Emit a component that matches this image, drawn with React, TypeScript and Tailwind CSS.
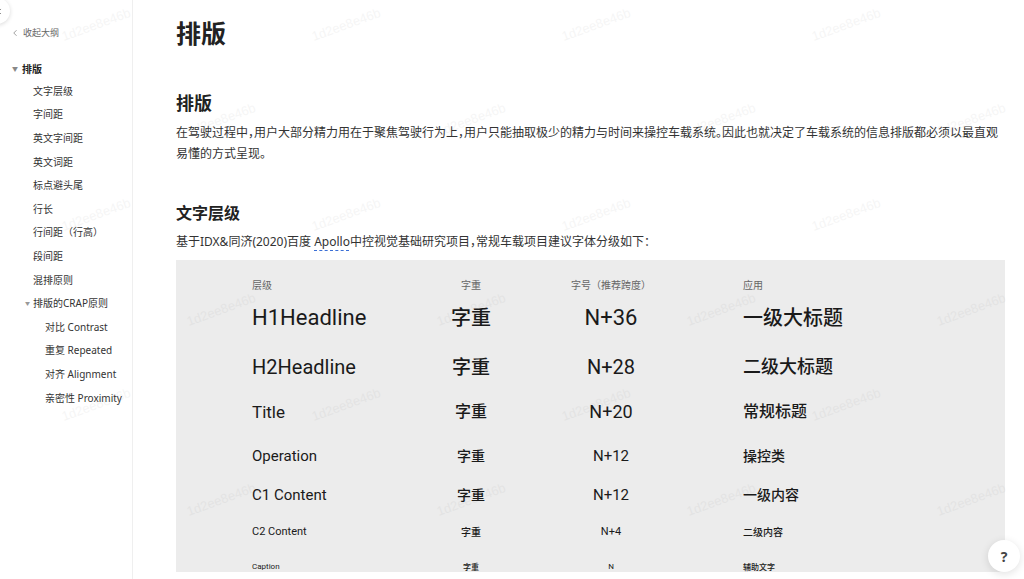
import { ChevronLeft } from "lucide-react";

const cjk = "font-['Noto_Sans','Noto_Sans_CJK_SC',sans-serif]";
const num = "font-['Roboto','Noto_Sans_CJK_SC',sans-serif]";

const outline = [
  { label: "文字层级", level: 1 },
  { label: "字间距", level: 1 },
  { label: "英文字间距", level: 1 },
  { label: "英文词距", level: 1 },
  { label: "标点避头尾", level: 1 },
  { label: "行长", level: 1 },
  { label: "行间距（行高）", level: 1 },
  { label: "段间距", level: 1 },
  { label: "混排原则", level: 1 },
  { label: "排版的CRAP原则", level: 1, open: true },
  { label: "对比 Contrast", level: 2 },
  { label: "重复 Repeated", level: 2 },
  { label: "对齐 Alignment", level: 2 },
  { label: "亲密性 Proximity", level: 2 },
];

interface Row {
  name: string;
  size: string;
  app: string;
  box: string;
  nameCls: string;
  weightCls: string;
  sizeCls: string;
  appCls: string;
}

const rows: Row[] = [
  { name: "H1Headline", size: "N+36", app: "一级大标题", box: "h-[28px] mt-[5px]", nameCls: "text-[22px]", weightCls: "text-[20px]", sizeCls: "text-[22px]", appCls: "text-[20px]" },
  { name: "H2Headline", size: "N+28", app: "二级大标题", box: "h-[28px] mt-[21px]", nameCls: "text-[20px]", weightCls: "text-[19px]", sizeCls: "text-[20px]", appCls: "text-[18px]" },
  { name: "Title", size: "N+20", app: "常规标题", box: "h-[28px] mt-[17px]", nameCls: "text-[17px]", weightCls: "text-[16px]", sizeCls: "text-[18px]", appCls: "text-[16px]" },
  { name: "Operation", size: "N+12", app: "操控类", box: "h-[28px] mt-[16px]", nameCls: "text-[15px]", weightCls: "text-[14px]", sizeCls: "text-[15px]", appCls: "text-[14px]" },
  { name: "C1 Content", size: "N+12", app: "一级内容", box: "h-[28px] mt-[11px]", nameCls: "text-[15px]", weightCls: "text-[14px]", sizeCls: "text-[15px]", appCls: "text-[14px]" },
  { name: "C2 Content", size: "N+4", app: "二级内容", box: "h-[28px] mt-[9px]", nameCls: "text-[11px]", weightCls: "text-[10px]", sizeCls: "text-[11px]", appCls: "text-[10px]" },
  { name: "Caption", size: "N", app: "辅助文字", box: "h-[12px] mt-[15px]", nameCls: "text-[8px]", weightCls: "text-[8px]", sizeCls: "text-[8px]", appCls: "text-[8px]" },
];

// faint account watermark tiled over the page
const marks: { x: number; y: number }[] = [];
for (let r = 0; r < 6; r++) {
  for (let c = 0; c < 4; c++) {
    marks.push({ x: (r % 2 === 0 ? 60 : 185) + c * 250, y: 15 + r * 95 });
  }
}

export default function App() {
  return (
    <div className={`relative h-[579px] w-[1024px] overflow-hidden bg-white text-[#222] ${cjk}`}>
      <div className="flex h-full">
        {/* outline */}
        <aside className="w-[133px] shrink-0 border-r border-[#efefef] pt-[26px]">
          <div className="flex items-center gap-[3px] pl-[10px] text-[9px] text-[#666]">
            <ChevronLeft className="h-[10px] w-[10px]" strokeWidth={1.5} />
            <span>收起大纲</span>
          </div>
          <div className="mt-[22px] flex items-center gap-[4px] pl-[12px] text-[10px] font-bold text-[#222]">
            <span className="text-[6px] text-[#888]">▼</span>
            <span>排版</span>
          </div>
          <ul className="mt-[3px]">
            {outline.map((o) => (
              <li
                key={o.label}
                className={`flex h-[23.6px] items-center text-[10px] text-[#333] ${
                  o.level === 2 ? "pl-[45px]" : o.open ? "pl-[25px]" : "pl-[33px]"
                }`}
              >
                {o.open && <span className="mr-[3px] text-[5px] text-[#999]">▼</span>}
                {o.label}
              </li>
            ))}
          </ul>
        </aside>

        {/* content */}
        <main className="ml-[43px] w-[829px] pt-[15px]">
          <h1 className="text-[25px] font-bold leading-[36px] text-[#222]">排版</h1>
          <h2 className="mt-[39px] text-[18px] font-bold leading-[26px] text-[#222]">排版</h2>
          <p className="mt-[6px] text-[12px] leading-[21px] text-[#333] [font-feature-settings:'halt']">
            在驾驶过程中，用户大部分精力用在于聚焦驾驶行为上，用户只能抽取极少的精力与时间来操控车载系统。因此也就决定了车载系统的信息排版都必须以最直观易懂的方式呈现。
          </p>
          <h3 className="mt-[37px] text-[16px] font-bold leading-[24px] text-[#222]">文字层级</h3>
          <p className="mt-[6px] text-[12px] leading-[21px] text-[#333] [font-feature-settings:'halt']">
            基于IDX&amp;同济(2020)百度{" "}
            <span className="underline decoration-[#3b6fd6] decoration-dashed underline-offset-[4px]">Apollo</span>
            中控视觉基础研究项目，常规车载项目建议字体分级如下：
          </p>

          <div className="mt-[8px] h-[312px] overflow-hidden bg-[#ececec] pl-[76px] pt-[11px] text-[#1a1a1a]">
            <div className="grid h-[28px] grid-cols-[180px_78px_202px_1fr] items-center text-[10px] leading-[1.2] text-[#666]">
              <span>层级</span>
              <span className="text-center">字重</span>
              <span className="text-center">字号（推荐跨度）</span>
              <span className="pl-[31px]">应用</span>
            </div>
            {rows.map((r) => (
              <div
                key={r.name}
                className={`grid grid-cols-[180px_78px_202px_1fr] items-center whitespace-nowrap leading-[1.2] ${r.box}`}
              >
                <span className={`${num} ${r.nameCls}`}>{r.name}</span>
                <span className={`text-center font-medium ${r.weightCls}`}>字重</span>
                <span className={`${num} text-center ${r.sizeCls}`}>{r.size}</span>
                <span className={`pl-[31px] font-medium ${r.appCls}`}>{r.app}</span>
              </div>
            ))}
          </div>
        </main>
      </div>

      {/* watermark */}
      <div className="pointer-events-none absolute inset-0">
        {marks.map((m, i) => (
          <span
            key={i}
            className="absolute -rotate-[20deg] font-['Liberation_Sans',sans-serif] text-[13px] text-[#000] opacity-[0.035]"
            style={{ left: m.x, top: m.y }}
          >
            1d2ee8e46b
          </span>
        ))}
      </div>

      {/* collapse toggle */}
      <div className="absolute left-[-16px] top-[-2px] flex h-[26px] w-[26px] items-center justify-end rounded-full bg-white pr-[6px] shadow-[0_1px_4px_rgba(0,0,0,0.15)]">
        <ChevronLeft className="h-[9px] w-[9px] text-[#555]" strokeWidth={2} />
      </div>

      {/* help */}
      <div className="absolute bottom-[7px] right-[4px] flex h-[32px] w-[32px] items-center justify-center rounded-full bg-white text-[14px] font-bold text-[#444] shadow-[0_2px_8px_rgba(0,0,0,0.12)]">
        ?
      </div>
    </div>
  );
}
